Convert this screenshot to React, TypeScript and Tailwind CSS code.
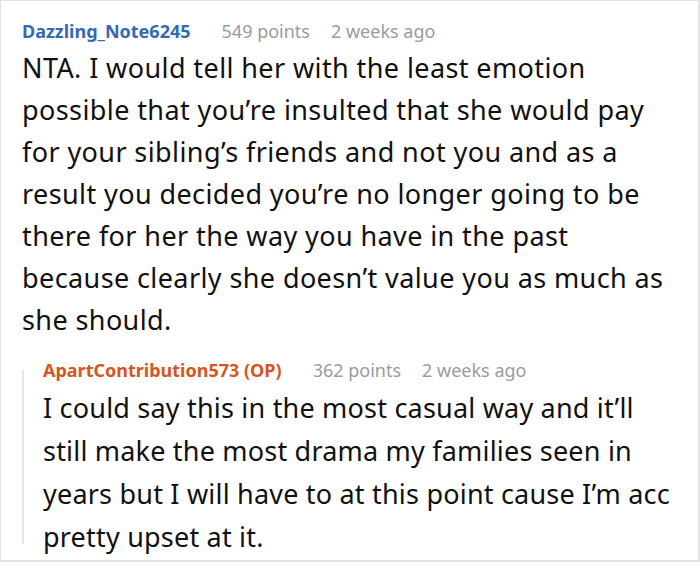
import React from 'react';

const font = { fontFamily: '"Noto Sans", "Open Sans", sans-serif' };

interface MetaProps {
  author: string;
  authorClass: string;
  points: number;
  age: string;
}

const Meta: React.FC<MetaProps> = ({ author, authorClass, points, age }) => (
  <div className="flex items-baseline text-[18px] leading-[24px] whitespace-nowrap">
    <span className={`font-bold ${authorClass}`}>{author}</span>
    <span className="ml-[31px] text-[#9b9b9b]">{points} points</span>
    <span className="ml-[21px] text-[#9b9b9b]">{age}</span>
  </div>
);

export default function App() {
  return (
    <div
      style={font}
      className="w-[700px] h-[562px] bg-white border-t border-l border-r-2 border-b-2 border-[#e3e3e3] overflow-hidden"
    >
      <div className="pl-[21px] pt-[18px]">
        <Meta author="Dazzling_Note6245" authorClass="text-[#3568b5]" points={549} age="2 weeks ago" />
        <p className="mt-[4px] w-[652px] text-[27px] leading-[42px] tracking-[0.4px] text-[#111]">
          NTA. I would tell her with the least emotion possible that you’re insulted that she would pay for your
          sibling’s friends and not you and as a result you decided you’re no longer going to be there for her the
          way you have in the past because clearly she doesn’t value you as much as she should.
        </p>
      </div>
      <div className="ml-[21px] mt-[17px] flex">
        <div className="w-[2px] mt-[12px] mb-[14px] bg-[#e6e6e6] shrink-0" />
        <div className="pl-[19px]">
          <Meta author="ApartContribution573 (OP)" authorClass="text-[#d6561f]" points={362} age="2 weeks ago" />
          <p className="mt-[4px] w-[636px] text-[27px] leading-[43px] tracking-[0.2px] text-[#111]">
            I could say this in the most casual way and it’ll still make the most drama my families seen in years
            but I will have to at this point cause I’m acc pretty upset at it.
          </p>
        </div>
      </div>
    </div>
  );
}
